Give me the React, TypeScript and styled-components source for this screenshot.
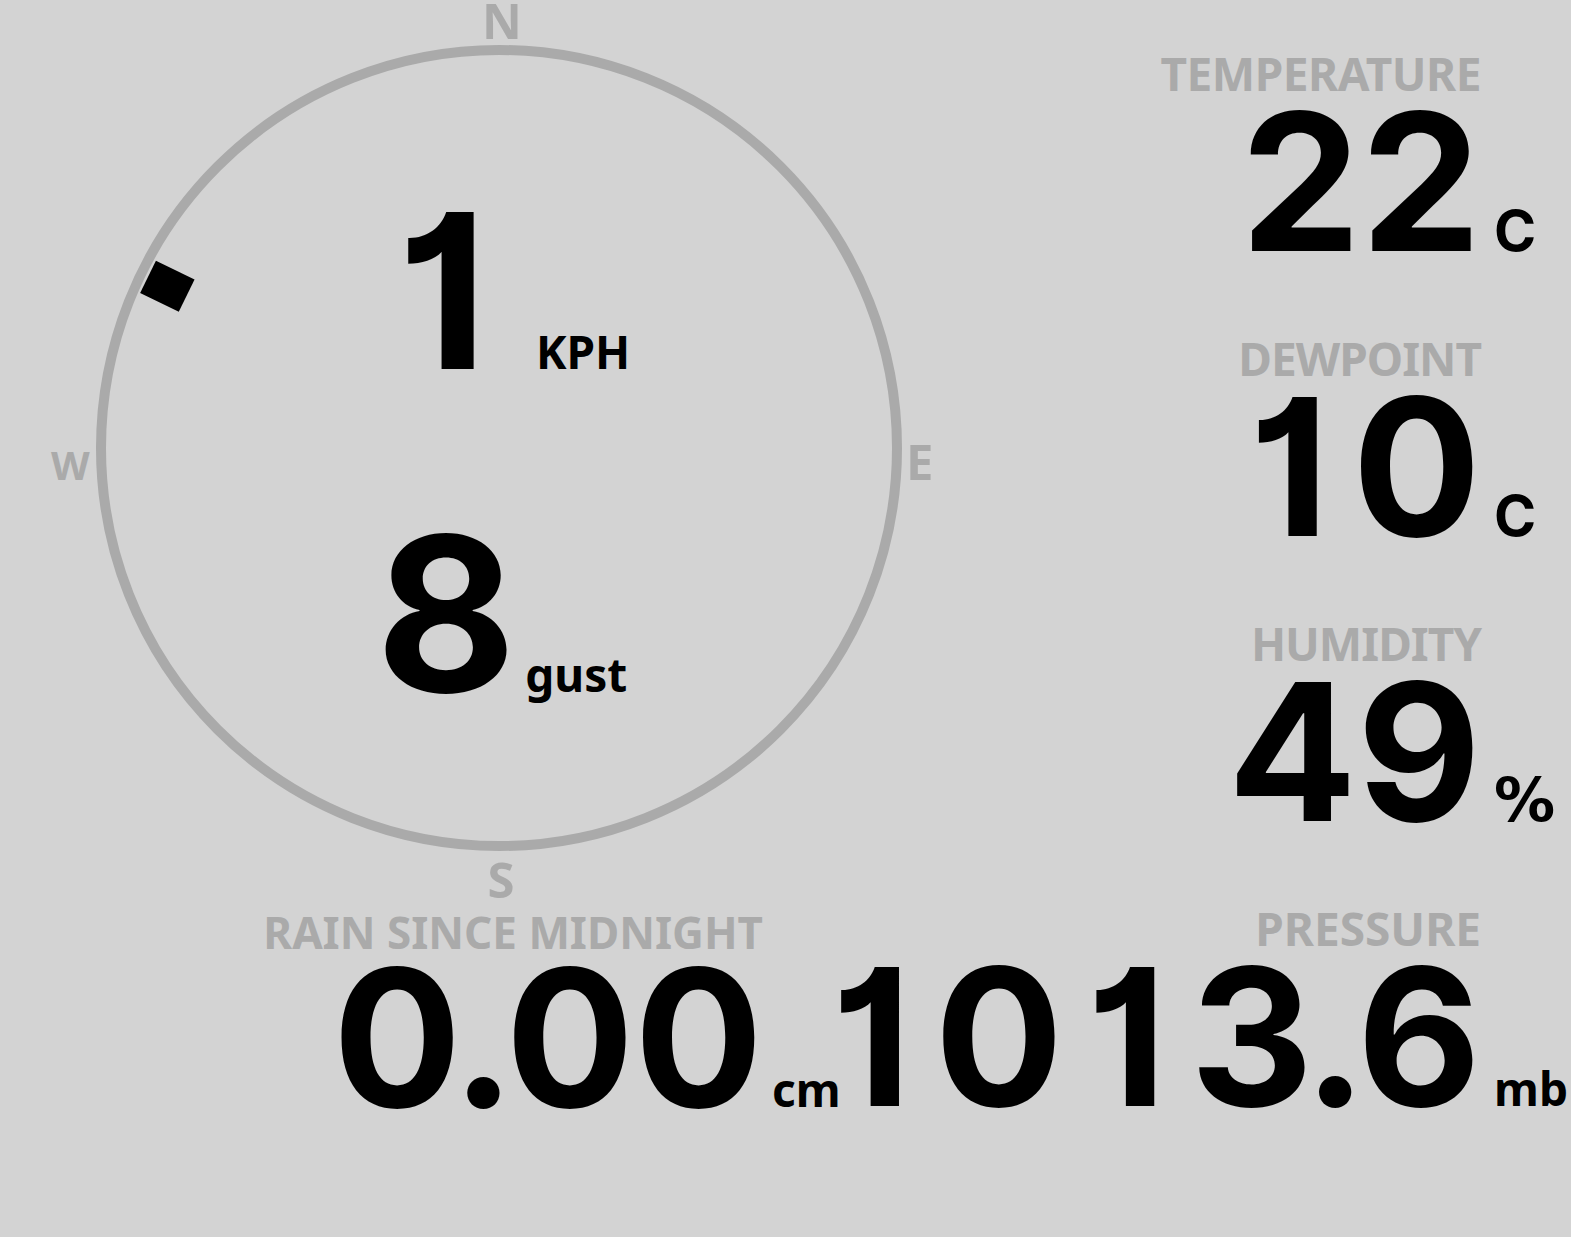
import React from "react";
import styled, { createGlobalStyle } from "styled-components";

const GlobalStyle = createGlobalStyle`
  html, body {
    margin: 0;
    padding: 0;
    background: #d3d3d3;
  }
  body {
    font-family: "Noto Sans", "DejaVu Sans", sans-serif;
    font-weight: 700;
    color: #000;
  }
`;

const Screen = styled.div`
  width: 1571px;
  height: 1237px;
  display: grid;
  grid-template-columns: minmax(0, 1fr) auto;
  background: #d3d3d3;
  overflow: hidden;
`;

const LeftPane = styled.div`
  min-width: 0;
  display: flex;
  flex-direction: column;
  padding: 45px 0 0 96px;
`;

const Dial = styled.div`
  position: relative;
  flex: none;
  box-sizing: border-box;
  width: 806px;
  height: 806px;
  border: 10px solid #aaa;
  border-radius: 50%;
  padding-top: 126px;
  display: flex;
  flex-direction: column;
`;

const Cardinal = styled.span<{ $size: number }>`
  position: absolute;
  font-size: ${(p) => p.$size}px;
  line-height: 40px;
  color: #aaa;
`;

const North = styled(Cardinal)`
  top: -55px;
  left: 396px;
  transform: translateX(-50%);
`;

const South = styled(Cardinal)`
  top: 804px;
  left: 395px;
  transform: translateX(-50%);
`;

const East = styled(Cardinal)`
  top: 386px;
  left: 800px;
`;

const West = styled(Cardinal)`
  top: 390px;
  left: -55px;
`;

const Pointer = styled.div`
  position: absolute;
  left: 50%;
  top: 50%;
  width: 36px;
  height: 43px;
  background: #000;
`;

const Reading = styled.div<{ $top?: number; $space: number; $shift: number }>`
  display: flex;
  justify-content: center;
  align-items: baseline;
  gap: ${(p) => p.$space}px;
  padding-left: ${(p) => p.$shift}px;
  margin-top: ${(p) => p.$top ?? 0}px;
`;

const Speed = styled.span`
  font-family: Inter, "Noto Sans", sans-serif;
  font-feature-settings: "cv01" 1;
  font-size: 216px;
  line-height: 220px;
`;

const SmallUnit = styled.span`
  font-size: 46px;
  line-height: 40px;
`;

const Glyph = styled.span<{ $pad: number }>`
  margin: 0 ${(p) => p.$pad}px;
`;

const Figures = ({ text }: { text: string }) => (
  <>
    {[...text].map((ch, i) =>
      ch === "1" ? (
        <Glyph key={i} $pad={23}>
          1
        </Glyph>
      ) : ch === "." ? (
        <Glyph key={i} $pad={-10}>
          .
        </Glyph>
      ) : (
        <React.Fragment key={i}>{ch}</React.Fragment>
      )
    )}
  </>
);

const StatGrid = styled.div`
  display: grid;
  grid-template-columns: auto auto;
  align-items: baseline;
  align-content: start;
`;

const RightPane = styled(StatGrid)`
  column-gap: 13px;
  padding: 50px 3px 0 0;
`;

const RainGrid = styled(StatGrid)`
  grid-template-columns: 667px auto;
  column-gap: 9px;
  margin-top: 59px;
`;

const Label = styled.div<{ $first?: boolean; $size?: number; $track?: number }>`
  grid-column: 1;
  justify-self: end;
  font-size: ${(p) => p.$size ?? 46}px;
  line-height: ${(p) => p.$size ?? 46}px;
  letter-spacing: ${(p) => p.$track ?? -1}px;
  color: #aaa;
  white-space: nowrap;
  margin-top: ${(p) => (p.$first ? 0 : 68)}px;
`;

const Value = styled.div<{ $pull?: number }>`
  grid-column: 1;
  justify-self: end;
  font-family: Inter, "Noto Sans", sans-serif;
  font-feature-settings: "cv01" 1;
  font-size: 191px;
  line-height: 171px;
  white-space: nowrap;
  margin-top: ${(p) => p.$pull ?? 0}px;
`;

const unitFonts = {
  plain: `"Noto Sans", sans-serif`,
  round: `Inter, "Noto Sans", sans-serif`,
  wide: `"DejaVu Sans", "Noto Sans", sans-serif`,
};

const Unit = styled.div<{ $size: number; $font?: keyof typeof unitFonts }>`
  grid-column: 2;
  font-family: ${(p) => unitFonts[p.$font ?? "plain"]};
  font-size: ${(p) => p.$size}px;
  line-height: 40px;
`;

type Stat = {
  label: string;
  value: string;
  unit: string;
  unitSize: number;
  font?: keyof typeof unitFonts;
  track?: number;
};

const stats: Stat[] = [
  { label: "TEMPERATURE", value: "22", unit: "C", unitSize: 57, font: "round", track: -0.5 },
  { label: "DEWPOINT", value: "10", unit: "C", unitSize: 57, font: "round" },
  { label: "HUMIDITY", value: "49", unit: "%", unitSize: 61, font: "wide" },
  { label: "PRESSURE", value: "1013.6", unit: "mb", unitSize: 46, track: 0 },
];

const windDirection = 296;

export default function App() {
  return (
    <>
      <GlobalStyle />
      <Screen>
        <LeftPane>
          <Dial>
            <North $size={49}>N</North>
            <East $size={49}>E</East>
            <South $size={49}>S</South>
            <West $size={40}>W</West>
            <Pointer
              style={{
                transform: `translate(-50%, -50%) rotate(${windDirection}deg) translateY(-369px)`,
              }}
            />
            <Reading $space={25} $shift={6}>
              <Speed>
                <Figures text="1" />
              </Speed>
              <SmallUnit>KPH</SmallUnit>
            </Reading>
            <Reading $top={103} $space={9} $shift={5}>
              <Speed>
                <Figures text="8" />
              </Speed>
              <SmallUnit>gust</SmallUnit>
            </Reading>
          </Dial>
          <RainGrid>
            <Label $first $size={44} $track={0}>
              RAIN SINCE MIDNIGHT
            </Label>
            <Value $pull={-2}>
              <Figures text="0.00" />
            </Value>
            <Unit $size={46}>cm</Unit>
          </RainGrid>
        </LeftPane>
        <RightPane>
          {stats.map((s, i) => (
            <React.Fragment key={s.label}>
              <Label $first={i === 0} $track={s.track}>
                {s.label}
              </Label>
              <Value>
                <Figures text={s.value} />
              </Value>
              <Unit $size={s.unitSize} $font={s.font}>
                {s.unit}
              </Unit>
            </React.Fragment>
          ))}
        </RightPane>
      </Screen>
    </>
  );
}
